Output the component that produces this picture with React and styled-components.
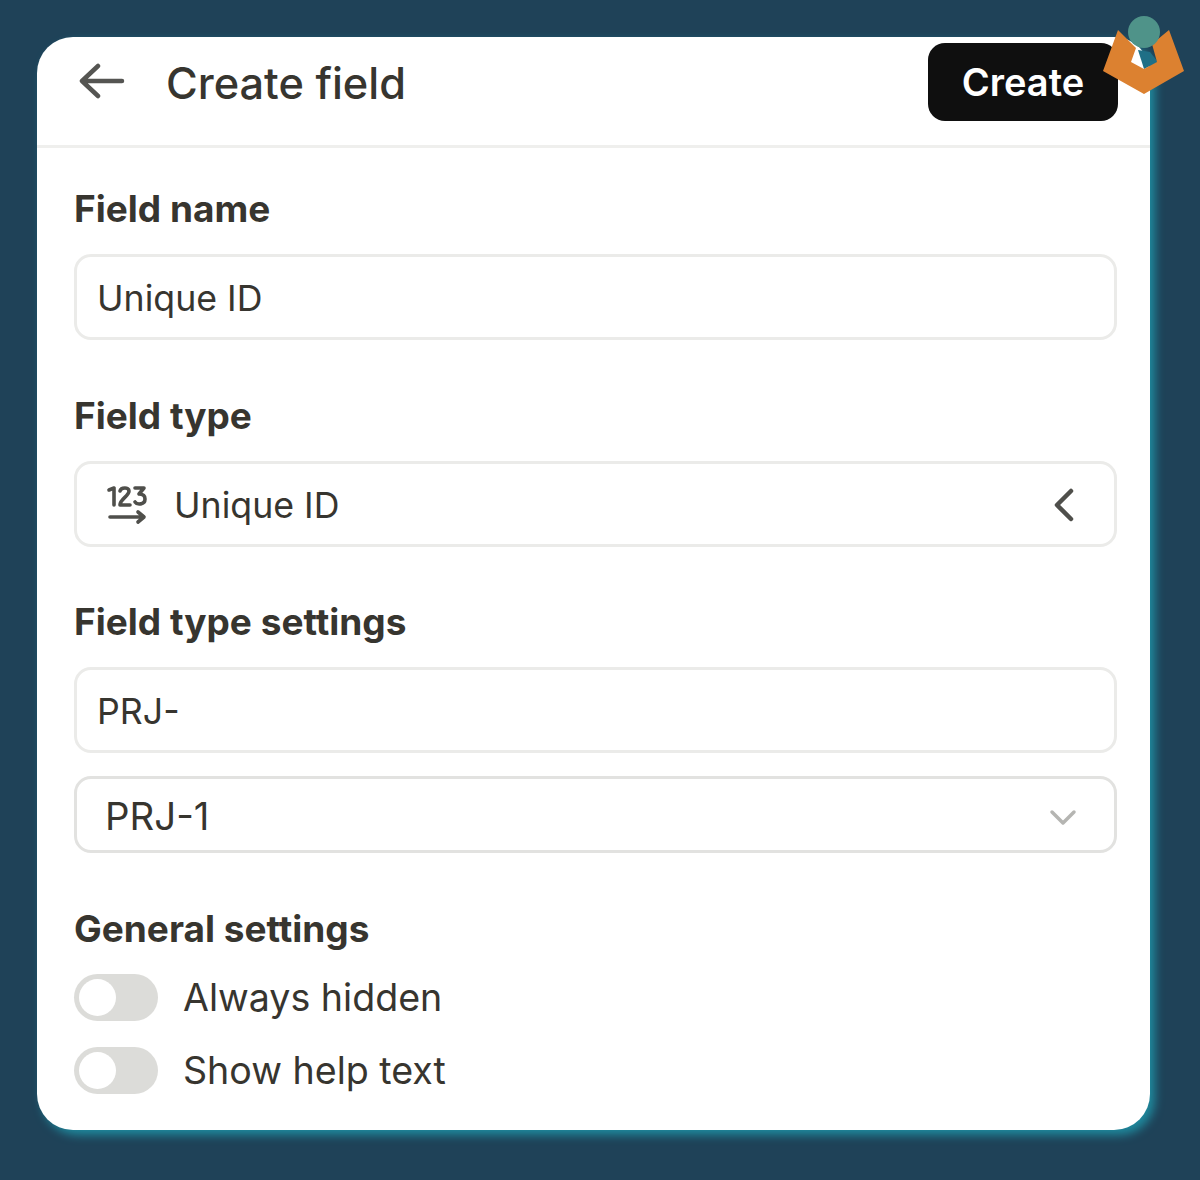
import styled, { createGlobalStyle } from 'styled-components';

const GlobalStyle = createGlobalStyle`
  html, body {
    margin: 0;
    padding: 0;
    background: #1f4258;
  }

  * {
    box-sizing: border-box;
  }
`;

const Page = styled.div`
  position: relative;
  width: 1200px;
  height: 1180px;
  padding: 37px 50px 50px 37px;
  background: #1f4258;
  font-family: Inter, "Liberation Sans", sans-serif;
  color: #37352f;
  overflow: hidden;
`;

const Card = styled.div`
  height: 1093px;
  background: #fff;
  border-radius: 36px;
  box-shadow: 5px 5px 10px #1f8a9e;
  overflow: hidden;
`;

const Header = styled.header`
  display: flex;
  align-items: center;
  height: 111px;
  padding: 0 32px 0 42px;
  border-bottom: 3px solid #efefed;
`;

const BackIcon = styled.svg`
  width: 46px;
  height: 38px;
  margin-right: 41px;
  margin-top: -20px;
`;

const Title = styled.h1`
  flex: 1;
  margin: -16px 0 0;
  font-size: 43.3px;
  font-weight: 500;
  line-height: 50px;
`;

const CreateButton = styled.button`
  width: 190px;
  height: 78px;
  margin-top: -18px;
  border: none;
  border-radius: 17px;
  background: #0f0f0f;
  color: #fff;
  font-family: inherit;
  font-size: 38px;
  font-weight: 600;
`;

const Content = styled.div`
  display: flex;
  flex-direction: column;
  padding: 39px 33px 0 37px;
`;

const Section = styled.section`
  display: flex;
  flex-direction: column;
  margin-bottom: 53.6px;
`;

const Label = styled.label`
  margin-bottom: 23px;
  font-size: 37px;
  font-weight: 700;
  line-height: 44px;
`;

const Field = styled.div`
  display: flex;
  align-items: center;
  height: ${props => (props.$compact ? '77px' : '86px')};
  padding: 2px ${props => (props.$compact ? '28px' : '20px')} 0;
  margin-top: ${props => (props.$compact ? '23px' : '0')};
  border: 3px solid ${props => (props.$compact ? '#e2e2e0' : '#ebebe9')};
  border-radius: 17px;
  font-size: ${props => (props.$compact ? '38.4px' : '35.7px')};
`;

const FieldIcon = styled.svg`
  width: 44px;
  height: 40px;
  margin: 0 25px 0 8px;
  flex-shrink: 0;
`;

const FieldValue = styled.span`
  flex: 1;
`;

const ToggleRow = styled.div`
  display: flex;
  align-items: center;
  height: 47px;
  margin-bottom: 26px;
  padding-top: 1px;
  font-size: 37.6px;
`;

const Toggle = styled.span`
  display: flex;
  align-items: center;
  width: 84px;
  height: 47px;
  margin: -1px 25px 0 0;
  padding: 0 5px;
  border-radius: 24px;
  background: #dcdcd9;
`;

const Knob = styled.span`
  width: 37px;
  height: 37px;
  border-radius: 50%;
  background: #fff;
`;

const ChevronLeft = styled.svg`
  width: 24px;
  height: 34px;
  margin-right: 18px;
`;

const ChevronDown = styled.svg`
  width: 28px;
  height: 18px;
  margin: 4px 9px 0 0;
`;

const Logo = styled.svg`
  position: absolute;
  top: 15px;
  left: 1100px;
  width: 90px;
  height: 82px;
`;

function ToggleItem({ children }) {
  return (
    <ToggleRow>
      <Toggle>
        <Knob />
      </Toggle>
      {children}
    </ToggleRow>
  );
}

export default function App() {
  return (
    <>
      <GlobalStyle />
      <Page>
        <Card>
          <Header>
            <BackIcon viewBox="0 0 46 38" fill="none" stroke="#555552" strokeWidth="4.5" strokeLinecap="round" strokeLinejoin="round">
              <path d="M43 19H3M19 4L3 19l16 15" />
            </BackIcon>
            <Title>Create field</Title>
            <CreateButton>Create</CreateButton>
          </Header>
          <Content>
            <Section>
              <Label>Field name</Label>
              <Field>Unique ID</Field>
            </Section>
            <Section>
              <Label>Field type</Label>
              <Field>
                <FieldIcon viewBox="-1 0 44 40" fill="none" stroke="#4f4f4b" strokeLinecap="round" strokeLinejoin="round">
                  <path strokeWidth="3.6" d="M3 5l5-2v17M14 6c1-4 9-4 9 0 0 5-9 8-9 14h10M29 3h9l-5 6c4 0 6 2 6 5 0 6-8 6-10 3" />
                  <path strokeWidth="3.6" d="M4 32h33M32 27l6 5-6 5" />
                </FieldIcon>
                <FieldValue>Unique ID</FieldValue>
                <ChevronLeft viewBox="0 0 24 34" fill="none" stroke="#4f4f4b" strokeWidth="4.5" strokeLinecap="round" strokeLinejoin="round">
                  <path d="M19 3L5 17l14 14" />
                </ChevronLeft>
              </Field>
            </Section>
            <Section>
              <Label>Field type settings</Label>
              <Field>PRJ-</Field>
              <Field $compact>
                <FieldValue>PRJ-1</FieldValue>
                <ChevronDown viewBox="0 0 28 18" fill="none" stroke="#b5b5b2" strokeWidth="3.5" strokeLinecap="round" strokeLinejoin="round">
                  <path d="M3 3l11 11L25 3" />
                </ChevronDown>
              </Field>
            </Section>
            <div>
              <Label as="div">General settings</Label>
              <ToggleItem>Always hidden</ToggleItem>
              <ToggleItem>Show help text</ToggleItem>
            </div>
          </Content>
        </Card>
        <Logo viewBox="1100 15 90 82">
          <polygon points="1150,52 1158,62 1144,69 1138,50" fill="#1f6f86" />
          <polygon points="1118,30 1103,71 1144,94 1184,71 1169,30 1152,44 1157,62 1144,69 1131,62 1136,48" fill="#dc8130" />
          <circle cx="1144" cy="32" r="16" fill="#4f9389" />
        </Logo>
      </Page>
    </>
  );
}
